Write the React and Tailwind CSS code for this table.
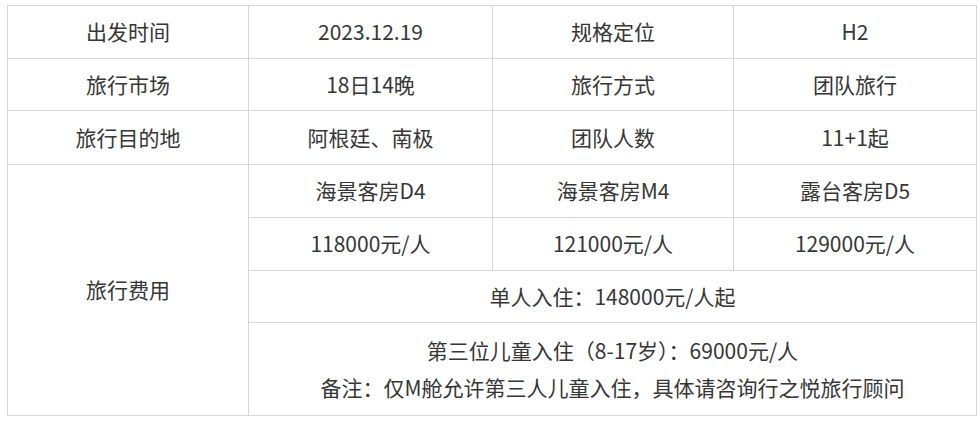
import React from "react";

const cell = "bg-white flex items-center justify-center text-center";

export default function App() {
  return (
    <div className="w-[979px] h-[422px] bg-white pt-[5px] pl-[7px]">
      <div
        className="grid grid-cols-[240px_243px_240px_242px] grid-rows-[52px_51px_53px_52px_52px_51px_92px] gap-px bg-[#d6d6d6] p-px w-fit text-[21px] text-[#363636] font-['Noto_Sans_CJK_SC','Noto_Sans',sans-serif]"
      >
        <div className={cell}>出发时间</div>
        <div className={cell}>2023.12.19</div>
        <div className={cell}>规格定位</div>
        <div className={cell}>H2</div>

        <div className={cell}>旅行市场</div>
        <div className={cell}>18日14晚</div>
        <div className={cell}>旅行方式</div>
        <div className={cell}>团队旅行</div>

        <div className={cell}>旅行目的地</div>
        <div className={cell}>阿根廷、南极</div>
        <div className={cell}>团队人数</div>
        <div className={cell}>11+1起</div>

        <div className={`${cell} row-span-4`}>旅行费用</div>
        <div className={cell}>海景客房D4</div>
        <div className={cell}>海景客房M4</div>
        <div className={cell}>露台客房D5</div>

        <div className={cell}>118000元/人</div>
        <div className={cell}>121000元/人</div>
        <div className={cell}>129000元/人</div>

        <div className={`${cell} col-span-3`}>单人入住：148000元/人起</div>

        <div className={`${cell} col-span-3 flex-col leading-[37px]`}>
          <div>第三位儿童入住（8-17岁）：69000元/人</div>
          <div>备注：仅M舱允许第三人儿童入住，具体请咨询行之悦旅行顾问</div>
        </div>
      </div>
    </div>
  );
}
